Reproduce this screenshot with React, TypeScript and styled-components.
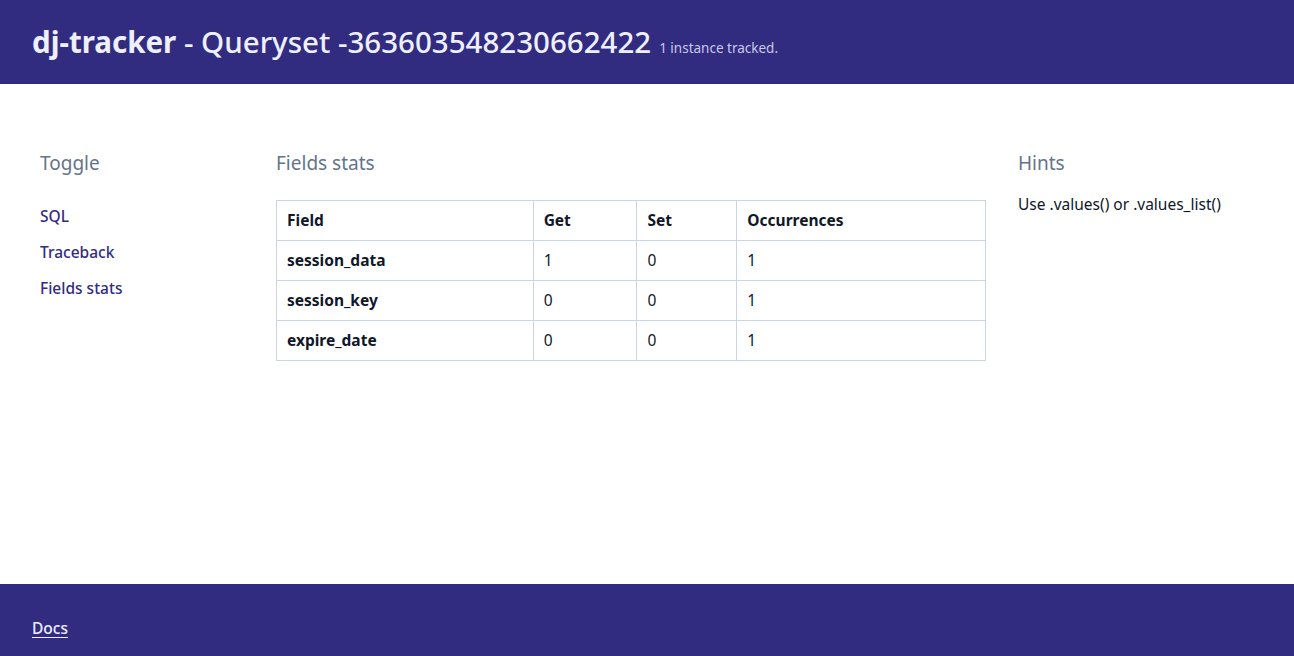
import React from "react";
import styled, { createGlobalStyle } from "styled-components";

const Global = createGlobalStyle`
  html, body { margin: 0; padding: 0; background: #ffffff; }
  body { font-family: "Noto Sans", "Open Sans", sans-serif; color: #0f172a; }
  * { box-sizing: border-box; }
`;

const Page = styled.div`
  display: flex;
  flex-direction: column;
  min-height: 656px;
`;

const Header = styled.header`
  height: 84px;
  background: #322c80;
  display: flex;
  align-items: center;
  padding: 0 32px 2px;
  color: #eef0ff;
`;

const Title = styled.h1`
  margin: 0;
  font-size: 29.5px;
  font-weight: 500;
  display: flex;
  align-items: baseline;
  gap: 8px;
`;

const Brand = styled.span`
  font-weight: 700;
`;

const Sub = styled.span`
  font-size: 13.5px;
  font-weight: 400;
  color: #c9c8ea;
`;

const Main = styled.main`
  flex: 1;
  display: grid;
  grid-template-columns: 236px 1fr 236px;
  padding: 64px 40px 0;
`;

const Column = styled.section<{ $pr?: number }>`
  padding-right: ${(p) => p.$pr ?? 0}px;
`;

const Heading = styled.h2`
  margin: 0 0 22px;
  font-size: 19px;
  line-height: 30px;
  font-weight: 400;
  color: #64748b;
`;

const LinkList = styled.nav`
  display: flex;
  flex-direction: column;
  gap: 12px;
  padding-top: 4px;
`;

const NavLink = styled.a`
  font-size: 15.5px;
  line-height: 24px;
  font-weight: 500;
  color: #322c80;
  text-decoration: none;
`;

const Table = styled.table`
  width: 710px;
  border-collapse: collapse;
  font-size: 15.5px;
`;

const Th = styled.th<{ $w: number }>`
  width: ${(p) => p.$w}px;
  height: 40px;
  padding: 0 10px 2px;
  text-align: left;
  font-weight: 700;
  border: 1px solid #cbd5e1;
  color: #0f172a;
`;

const Td = styled.td<{ $bold?: boolean }>`
  height: 40px;
  padding: 0 10px 2px;
  border: 1px solid #cbd5e1;
  font-weight: ${(p) => (p.$bold ? 700 : 400)};
  color: #0f172a;
`;

const HintText = styled.p`
  margin: -8px 0 0;
  font-size: 15.5px;
  line-height: 24px;
  color: #0f172a;
`;

const Footer = styled.footer`
  height: 72px;
  background: #322c80;
  display: flex;
  align-items: center;
  padding: 16px 32px 0;
`;

const FooterLink = styled.a`
  color: #eef0ff;
  font-size: 15.5px;
  font-weight: 500;
  text-decoration: underline;
  text-underline-offset: 3px;
`;

const rows = [
  { field: "session_data", get: 1, set: 0, occ: 1 },
  { field: "session_key", get: 0, set: 0, occ: 1 },
  { field: "expire_date", get: 0, set: 0, occ: 1 },
];

export default function App() {
  return (
    <Page>
      <Global />
      <Header>
        <Title>
          <span>
            <Brand>dj-tracker</Brand> - Queryset -363603548230662422
          </span>
          <Sub>1 instance tracked.</Sub>
        </Title>
      </Header>
      <Main>
        <Column>
          <Heading>Toggle</Heading>
          <LinkList>
            <NavLink href="#">SQL</NavLink>
            <NavLink href="#">Traceback</NavLink>
            <NavLink href="#">Fields stats</NavLink>
          </LinkList>
        </Column>
        <Column $pr={32}>
          <Heading>Fields stats</Heading>
          <Table>
            <thead>
              <tr>
                <Th $w={257}>Field</Th>
                <Th $w={104}>Get</Th>
                <Th $w={100}>Set</Th>
                <Th $w={249}>Occurrences</Th>
              </tr>
            </thead>
            <tbody>
              {rows.map((r) => (
                <tr key={r.field}>
                  <Td $bold>{r.field}</Td>
                  <Td>{r.get}</Td>
                  <Td>{r.set}</Td>
                  <Td>{r.occ}</Td>
                </tr>
              ))}
            </tbody>
          </Table>
        </Column>
        <Column>
          <Heading>Hints</Heading>
          <HintText>Use .values() or .values_list()</HintText>
        </Column>
      </Main>
      <Footer>
        <FooterLink href="#">Docs</FooterLink>
      </Footer>
    </Page>
  );
}
